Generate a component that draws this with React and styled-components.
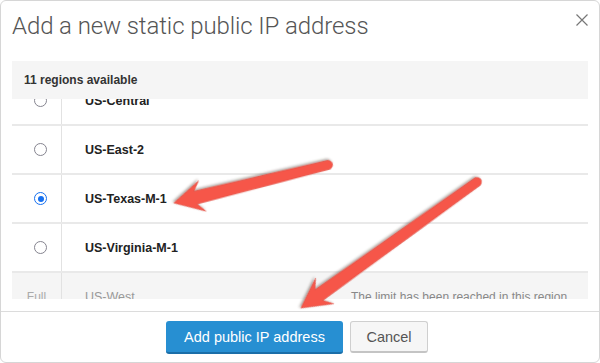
import styled, { createGlobalStyle } from 'styled-components';

const GlobalStyle = createGlobalStyle`
	html, body {
		margin: 0;
		padding: 0;
		background: #ffffff;
	}
	* {
		box-sizing: border-box;
	}
`;

const regions = [
	{ name: 'US-Central' },
	{ name: 'US-East-2' },
	{ name: 'US-Texas-M-1', selected: true },
	{ name: 'US-Virginia-M-1' },
	{ name: 'US-West', full: true, note: 'The limit has been reached in this region' },
];

// arrow drawn pointing along +x, then rotated into place
const arrowPath = (L) =>
	`M 0,-4.5 L ${L - 22},-6.5 L ${L - 29},-15.5 L ${L},0 L ${L - 29},15.5 L ${L - 22},6.5 L 0,4.5 A 4.5,4.5 0 0 1 0,-4.5 Z`;

const Arrow = ({ from, to }) => {
	const dx = to[0] - from[0];
	const dy = to[1] - from[1];
	const L = Math.sqrt(dx * dx + dy * dy);
	const angle = (Math.atan2(dy, dx) * 180) / Math.PI;
	return (
		<path
			d={arrowPath(L)}
			transform={`translate(${from[0]} ${from[1]}) rotate(${angle})`}
			fill="#f6574a"
			stroke="#e0483c"
			strokeWidth="0.6"
			filter="url(#arrowShadow)"
		/>
	);
};

const Radio = ({ checked }) => <RadioRing checked={checked}>{checked && <RadioDot />}</RadioRing>;

const App = () => {
	return (
		<>
			<GlobalStyle />
			<Modal>
				<Head>
					<Title>Add a new static public IP address</Title>
					<Close aria-label="close">
						<svg width="12" height="12" viewBox="0 0 12 12">
							<path d="M0.5 0.5 L11.5 11.5 M11.5 0.5 L0.5 11.5" stroke="#777" strokeWidth="1.2" />
						</svg>
					</Close>
				</Head>
				<Body>
					<ListHead>11 regions available</ListHead>
					<ScrollArea>
						<List>
							{regions.map((r) => (
								<Row key={r.name} full={r.full}>
									<RadioCell>{r.full ? <FullTag>Full</FullTag> : <Radio checked={r.selected} />}</RadioCell>
									<Name full={r.full}>{r.name}</Name>
									<Note>{r.note}</Note>
								</Row>
							))}
						</List>
					</ScrollArea>
				</Body>
				<Footer>
					<Primary>Add public IP address</Primary>
					<Secondary>Cancel</Secondary>
				</Footer>
				<Overlay width="600" height="363" viewBox="0 0 600 363">
					<defs>
						<filter id="arrowShadow" x="-10%" y="-30%" width="120%" height="160%">
							<feDropShadow dx="0.8" dy="1.5" stdDeviation="1" floodColor="#3a2a20" floodOpacity="0.45" />
						</filter>
					</defs>
					<Arrow from={[328, 165]} to={[174, 203]} />
					<Arrow from={[477, 182]} to={[301, 308]} />
				</Overlay>
			</Modal>
		</>
	);
};
export default App;

const Modal = styled.div`
	position: relative;
	width: 600px;
	height: 363px;
	display: flex;
	flex-direction: column;
	border: 1px solid #d6d6d6;
	border-radius: 6px;
	background: #fff;
	overflow: hidden;
	font-family: 'Liberation Sans', Arial, sans-serif;
`;

const Head = styled.div`
	display: flex;
	justify-content: space-between;
	align-items: flex-start;
	padding: 7px 11px 0 11px;
	height: 60px;
`;

const Title = styled.h1`
	margin: 0;
	font-family: Roboto, 'Liberation Sans', sans-serif;
	font-weight: 300;
	font-size: 24px;
	line-height: 37px;
	color: #555;
	letter-spacing: -0.1px;
`;

const Close = styled.button`
	border: none;
	background: none;
	padding: 0;
	margin-top: 6px;
	width: 12px;
	height: 12px;
	display: flex;
	cursor: pointer;
`;

const Body = styled.div`
	padding: 0 11px 12px 11px;
	border-bottom: 1px solid #dcdcdc;
`;

const ListHead = styled.div`
	height: 38px;
	display: flex;
	align-items: center;
	padding-left: 12px;
	background: #f5f5f5;
	font-size: 12px;
	font-weight: 700;
	color: #333;
`;

const ScrollArea = styled.div`
	height: 200px;
	overflow: hidden;
`;

const List = styled.div`
	margin-top: -22px;
`;

const Row = styled.div`
	display: grid;
	grid-template-columns: 50px 289px 1fr;
	height: 49px;
	border-bottom: 2px solid #e9e9e9;
	background: ${(p) => (p.full ? '#f5f5f5' : '#fff')};
`;

const RadioCell = styled.div`
	display: flex;
	align-items: center;
	justify-content: center;
	padding-left: 8px;
	border-right: 1px solid #e2e2e2;
`;

const FullTag = styled.span`
	margin-left: -8px;
	font-size: 12px;
	color: #aaa;
`;

const RadioRing = styled.span`
	width: 13px;
	height: 13px;
	border-radius: 50%;
	border: 1.7px solid ${(p) => (p.checked ? '#1670f0' : '#85848f')};
	background: #fff;
	display: flex;
	align-items: center;
	justify-content: center;
`;

const RadioDot = styled.span`
	width: 6px;
	height: 6px;
	border-radius: 50%;
	background: #1670f0;
`;

const Name = styled.div`
	display: flex;
	align-items: center;
	padding-left: 23px;
	font-size: 12.5px;
	font-weight: ${(p) => (p.full ? 400 : 700)};
	color: ${(p) => (p.full ? '#999' : '#222')};
`;

const Note = styled.div`
	display: flex;
	align-items: center;
	font-size: 12px;
	color: #888;
	white-space: nowrap;
`;

const Footer = styled.div`
	flex: 1;
	display: flex;
	justify-content: center;
	align-items: flex-start;
	gap: 7px;
	padding-top: 9px;
	padding-right: 6px;
`;

const Primary = styled.button`
	height: 33px;
	width: 177px;
	border: none;
	border-bottom: 2px solid #1b6ea8;
	border-radius: 3px;
	background: #278fd2;
	color: #fff;
	font-family: 'Liberation Sans', Arial, sans-serif;
	font-size: 14.5px;
`;

const Secondary = styled.button`
	height: 32px;
	width: 78px;
	border: 1px solid #cfcfcf;
	border-bottom: 2px solid #c4c4c4;
	border-radius: 3px;
	background: #f6f6f6;
	color: #555;
	font-family: 'Liberation Sans', Arial, sans-serif;
	font-size: 14.5px;
`;

const Overlay = styled.svg`
	position: absolute;
	left: -1px;
	top: -1px;
	pointer-events: none;
`;
